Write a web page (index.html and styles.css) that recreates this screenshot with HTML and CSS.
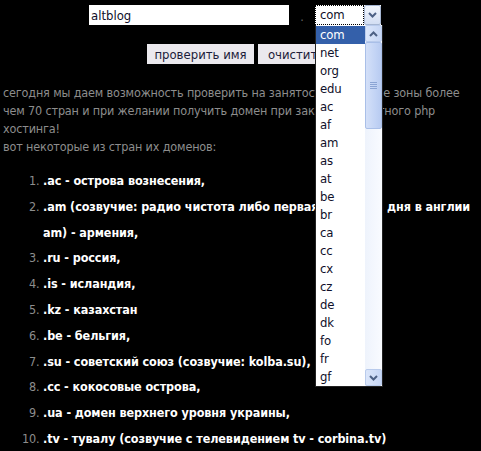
FILE: index.html
```html
<!DOCTYPE html>
<html lang="ru">
  <head>
    <meta charset="UTF-8" />
    <title>Проверка домена</title>
    <link rel="stylesheet" href="styles.css">
  </head>
  <body>
    <!-- Domain check form -->
    <form class="domain-form">
      <div class="name-row">
        <input class="name-input" type="text" value="altblog" />
        <span class="dot">.</span>
        <div class="zone-select">
          <span class="zone-value">com</span>
          <span class="zone-arrow">
            <svg width="9" height="6" viewBox="0 0 9 6"><path d="M1 1l3.5 3.5L8 1" fill="none" stroke="#4d6185" stroke-width="2"/></svg>
          </span>

          <!-- Opened zone list -->
          <div class="zone-popup">
            <ul class="zone-list">
              <li class="selected">com</li>
              <li>net</li>
              <li>org</li>
              <li>edu</li>
              <li>ac</li>
              <li>af</li>
              <li>am</li>
              <li>as</li>
              <li>at</li>
              <li>be</li>
              <li>br</li>
              <li>ca</li>
              <li>cc</li>
              <li>cx</li>
              <li>cz</li>
              <li>de</li>
              <li>dk</li>
              <li>fo</li>
              <li>fr</li>
              <li>gf</li>
            </ul>
            <div class="scrollbar">
              <span class="scroll-btn">
                <svg width="9" height="6" viewBox="0 0 9 6"><path d="M1 5l3.5-3.5L8 5" fill="none" stroke="#4d6185" stroke-width="2"/></svg>
              </span>
              <span class="scroll-thumb"><i></i><i></i><i></i><i></i></span>
              <span class="scroll-track"></span>
              <span class="scroll-btn">
                <svg width="9" height="6" viewBox="0 0 9 6"><path d="M1 1l3.5 3.5L8 1" fill="none" stroke="#4d6185" stroke-width="2"/></svg>
              </span>
            </div>
          </div>
        </div>
      </div>
      <div class="button-row">
        <button type="button" class="btn btn-check">проверить имя</button>
        <button type="button" class="btn btn-clear">очистить</button>
      </div>
    </form>

    <!-- Intro text -->
    <p class="intro">
      сегодня мы даем возможность проверить на занятость доменные зоны более
      чем 70 стран и при желании получить домен при заказе бесплатного php
      хостинга!<br />
      вот некоторые из стран их доменов:
    </p>

    <!-- Country domains -->
    <ol class="zones">
      <li><b>.ac - острова вознесения,</b></li>
      <li><b>.am (созвучие: радио чистота либо первая половина дня в англии am) - армения,</b></li>
      <li><b>.ru - россия,</b></li>
      <li><b>.is - исландия,</b></li>
      <li><b>.kz - казахстан</b></li>
      <li><b>.be - бельгия,</b></li>
      <li><b>.su - советский союз (созвучие: kolba.su),</b></li>
      <li><b>.cc - кокосовые острова,</b></li>
      <li><b>.ua - домен верхнего уровня украины,</b></li>
      <li><b>.tv - тувалу (созвучие с телевидением tv - corbina.tv)</b></li>
    </ol>
  </body>
</html>
```

FILE: styles.css
```css
/* Basic Reset */
* {
  margin: 0;
  padding: 0;
  box-sizing: border-box;
}

body {
  font-family: "DejaVu Sans Condensed", "DejaVu Sans", sans-serif;
  font-size: 12.5px;
  letter-spacing: -0.15px;
  background-color: #000;
  color: #8d8d8d;
  padding: 0 3px;
  overflow: hidden;
}

/* Form */
.name-row {
  display: flex;
  padding: 5px 0 0 86px;
  height: 25px;
}

.name-input {
  width: 200px;
  height: 20px;
  border: none;
  padding: 0 2px;
  font: inherit;
  font-size: 13px;
  color: #10102a;
  background: #fff;
  outline: none;
}

.dot {
  width: 26px;
  text-align: center;
  color: #666;
  line-height: 24px;
}

.zone-select {
  position: relative;
  display: flex;
  width: 66px;
  height: 20px;
  background: #fff;
}

.zone-value {
  flex: 1;
  padding-left: 4px;
  font-size: 13px;
  line-height: 18px;
  color: #10102a;
  border: 1px dotted #000;
}

.zone-arrow {
  width: 17px;
  height: 20px;
  display: flex;
  align-items: center;
  justify-content: center;
  border: 1px solid #a6b6d2;
  border-radius: 2px;
  background: linear-gradient(#f2f6fd, #d3def3);
}

/* Opened list */
.zone-popup {
  position: absolute;
  top: 20px;
  left: 0;
  width: 68px;
  height: 362px;
  display: flex;
  background: #fff;
  border: 1px solid #222;
  border-top: none;
  z-index: 10;
}

.zone-list {
  list-style: none;
  flex: 1;
  padding-top: 1px;
}

.zone-list li {
  height: 18px;
  line-height: 18px;
  padding-left: 4px;
  font-size: 13px;
  color: #10102a;
}

.zone-list li.selected {
  background: #3460aa;
  color: #fff;
}

.scrollbar {
  width: 17px;
  display: flex;
  flex-direction: column;
  background: linear-gradient(90deg, #eef3fc, #f9fbff);
}

.scroll-btn {
  height: 17px;
  display: flex;
  align-items: center;
  justify-content: center;
  border: 1px solid #b9cbec;
  border-radius: 2px;
  background: linear-gradient(90deg, #dbe6fa, #c6d6f5);
}

.scroll-thumb {
  height: 87px;
  display: flex;
  flex-direction: column;
  align-items: center;
  justify-content: center;
  gap: 1px;
  border: 1px solid #a9bfe8;
  border-radius: 2px;
  background: linear-gradient(90deg, #d4e0f8, #c3d4f5 60%, #b8cbf1);
}

.scroll-thumb i {
  display: block;
  width: 7px;
  height: 1px;
  background: #8ba4d4;
}

.scroll-track {
  flex: 1;
}

/* Buttons */
.button-row {
  display: flex;
  gap: 4px;
  padding: 19px 0 0 144px;
}

.btn {
  height: 20px;
  border: none;
  font: inherit;
  font-size: 13px;
  color: #1c1c3a;
  background: #ebe9ee;
}

.btn-check {
  width: 107px;
}

.btn-clear {
  width: 76px;
}

/* Intro */
.intro {
  margin-top: 20px;
  line-height: 18px;
}

/* Domain list */
.zones {
  margin-top: 12px;
  padding-left: 40px;
  line-height: 25.8px;
  letter-spacing: -0.1px;
}

.zones li {
  font-size: 12.5px;
}

.zones b {
  color: #fff;
}
```
